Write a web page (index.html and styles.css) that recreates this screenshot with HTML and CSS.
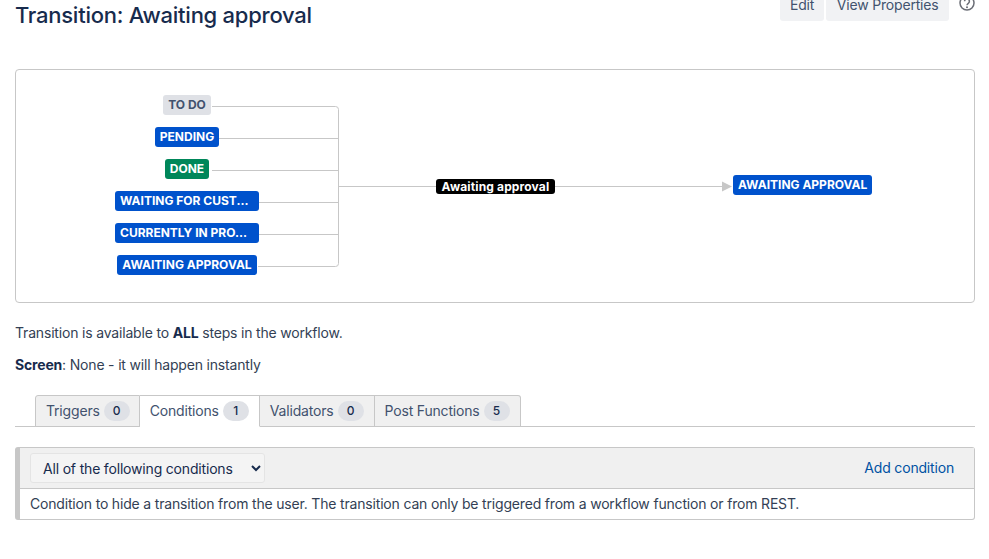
FILE: index.html
```html
<!DOCTYPE html>
<html lang="en">
<head>
<meta charset="utf-8">
<title>Transition: Awaiting approval</title>
<link rel="stylesheet" href="styles.css">
</head>
<body>
<header class="page-header">
  <h1 class="title">Transition: Awaiting approval</h1>
  <div class="actions">
    <button class="btn btn-edit">Edit</button>
    <button class="btn">View Properties</button>
    <svg class="help" width="16" height="16" viewBox="0 0 16 16" aria-hidden="true"><circle cx="8" cy="8" r="7" fill="none" stroke="#6b6e76" stroke-width="1.5"/><path d="M5.6 6.300a2.400 2.400 0 1 1 3.700 2c-.9.6-1.300 1-1.300 1.900" fill="none" stroke="#6b6e76" stroke-width="1.500"/><circle cx="8" cy="12.200" r="1" fill="#6b6e76"/></svg>
  </div>
</header>

<section class="diagram">
  <svg class="connectors" width="958" height="232" viewBox="0 0 958 232" aria-hidden="true">
    <path d="M196 36.500H319.500a3 3 0 0 1 3 3V193.500a3 3 0 0 1-3 3H242" fill="none" stroke="#c7c7c7"/>
    <path d="M203 68.500H322.500M196 100.500H322.500M243 132.500H322.500M243 164.500H322.500M322.500 116.500H708" fill="none" stroke="#c7c7c7"/>
    <path d="M706 111.500L716 116.500L706 121.500Z" fill="#c7c7c7"/>
  </svg>
  <div class="sources">
    <span class="lozenge grey">TO DO</span>
    <span class="lozenge blue">PENDING</span>
    <span class="lozenge green">DONE</span>
    <span class="lozenge blue wide">WAITING FOR CUST...</span>
    <span class="lozenge blue wide">CURRENTLY IN PRO...</span>
    <span class="lozenge blue">AWAITING APPROVAL</span>
  </div>
  <div class="transition"><span class="transition-name">Awaiting approval</span></div>
  <span class="lozenge blue target">AWAITING APPROVAL</span>
</section>

<p class="info">Transition is available to <strong>ALL</strong> steps in the workflow.</p>
<p class="info screen"><strong>Screen</strong>: None - it will happen instantly</p>

<nav class="tabs">
  <a class="tab">Triggers <span class="count">0</span></a>
  <a class="tab active">Conditions <span class="count">1</span></a>
  <a class="tab">Validators <span class="count">0</span></a>
  <a class="tab">Post Functions <span class="count">5</span></a>
</nav>

<section class="panel">
  <div class="panel-head">
    <select class="mode"><option>All of the following conditions</option></select>
    <a class="add">Add condition</a>
  </div>
  <div class="panel-body">Condition to hide a transition from the user. The transition can only be triggered from a workflow function or from REST.</div>
</section>
</body>
</html>
```
FILE: styles.css
```css
* { box-sizing: border-box; }
html, body { height: 100%; }
body {
  margin: 0;
  padding: 0 14px 0 15px;
  overflow: hidden;
  background: #fff;
  color: #172b4d;
  font: 14px/20px Inter, "Liberation Sans", sans-serif;
  letter-spacing: -0.18px;
}
.page-header {
  display: flex;
  justify-content: space-between;
  height: 69px;
}
.title {
  margin: 0;
  font-size: 22px;
  line-height: 30px;
  font-weight: 500;
  letter-spacing: -0.25px;
  color: #172b4d;
}
.actions {
  display: flex;
  gap: 2px;
  margin-top: -11px;
  height: 32px;
}
.btn {
  height: 32px;
  padding: 0 10.500px;
  border: 0;
  border-radius: 3px;
  background: #f1f2f4;
  color: #42526e;
  font: inherit;
  letter-spacing: inherit;
}
.btn-edit { padding: 0 10px; }
.help { margin: 6px 0 0 8px; }
.diagram {
  position: relative;
  display: flex;
  align-items: center;
  height: 234px;
  border: 1px solid #c7c7c7;
  border-radius: 4px;
  padding-left: 99px;
}
.connectors { position: absolute; left: 0; top: 0; }
.sources {
  position: relative;
  display: flex;
  flex-direction: column;
  align-items: center;
  gap: 12px;
  width: 144px;
  margin-top: -2px;
}
.lozenge {
  height: 20px;
  padding: 0 5px;
  border-radius: 3px;
  font-size: 12px;
  line-height: 20px;
  font-weight: 700;
  letter-spacing: 0;
  white-space: nowrap;
}
.grey { background: #dfe1e6; color: #42526e; }
.blue { background: #0052cc; color: #fff; }
.green { background: #00875a; color: #fff; }
.wide { width: 144px; }
.transition {
  position: relative;
  display: flex;
  justify-content: center;
  width: 474px;
  padding-right: 1px;
}
.transition-name {
  height: 15px;
  padding: 0 5.500px;
  border-radius: 3px;
  background: #000;
  color: #fff;
  font-size: 12px;
  line-height: 15px;
  font-weight: 700;
  letter-spacing: 0.15px;
}
.target { position: relative; margin-top: -3px; }
.info { margin: 0; padding-top: 20px; color: #333f55; font-size: 14px; line-height: 20px; }
.info strong { color: #172b4d; font-weight: 700; }
.screen { padding-top: 12px; }
.tabs {
  display: flex;
  height: 32px;
  margin-top: 20px;
  padding-left: 20px;
  border-bottom: 1px solid #c7c7c7;
}
.tab {
  display: flex;
  align-items: center;
  gap: 4px;
  height: 32px;
  padding: 0 10px;
  border: 1px solid #c7c7c7;
  border-left-width: 0;
  background: #f0f0f0;
  color: #42526e;
  font-size: 14px;
}
.tab:first-child { padding-right: 9px; border-left-width: 1px; border-top-left-radius: 3px; }
.tab:last-child { border-top-right-radius: 3px; }
.tab.active { background: #fff; border-bottom-color: #fff; }
.count {
  min-width: 26px;
  height: 20px;
  border-radius: 10px;
  background: #dfe1e6;
  color: #172b4d;
  font-size: 12px;
  line-height: 20px;
  font-weight: 500;
  letter-spacing: 0;
  text-align: center;
}
.panel {
  margin-top: 20px;
  height: 73px;
  border: 1px solid #c7c7c7;
  border-left: 5px solid #c7c7c7;
  border-radius: 3px;
}
.panel-head {
  display: flex;
  align-items: center;
  justify-content: space-between;
  height: 41px;
  padding: 0 20px 0 10px;
  border-bottom: 1px solid #c7c7c7;
  background: #f0f0f0;
}
.mode {
  width: 235px;
  height: 30px;
  padding-left: 8px;
  border: 1px solid #e4e4e4;
  border-radius: 3px;
  background: #f4f4f4;
  color: #172b4d;
  font: 14px Inter, "Liberation Sans", sans-serif;
  letter-spacing: -0.18px;
}
.add { color: #0052a3; font-size: 14px; }
.panel-body {
  padding: 5px 10px;
  color: #333f55;
  font-size: 14px;
  line-height: 20px;
}
```
